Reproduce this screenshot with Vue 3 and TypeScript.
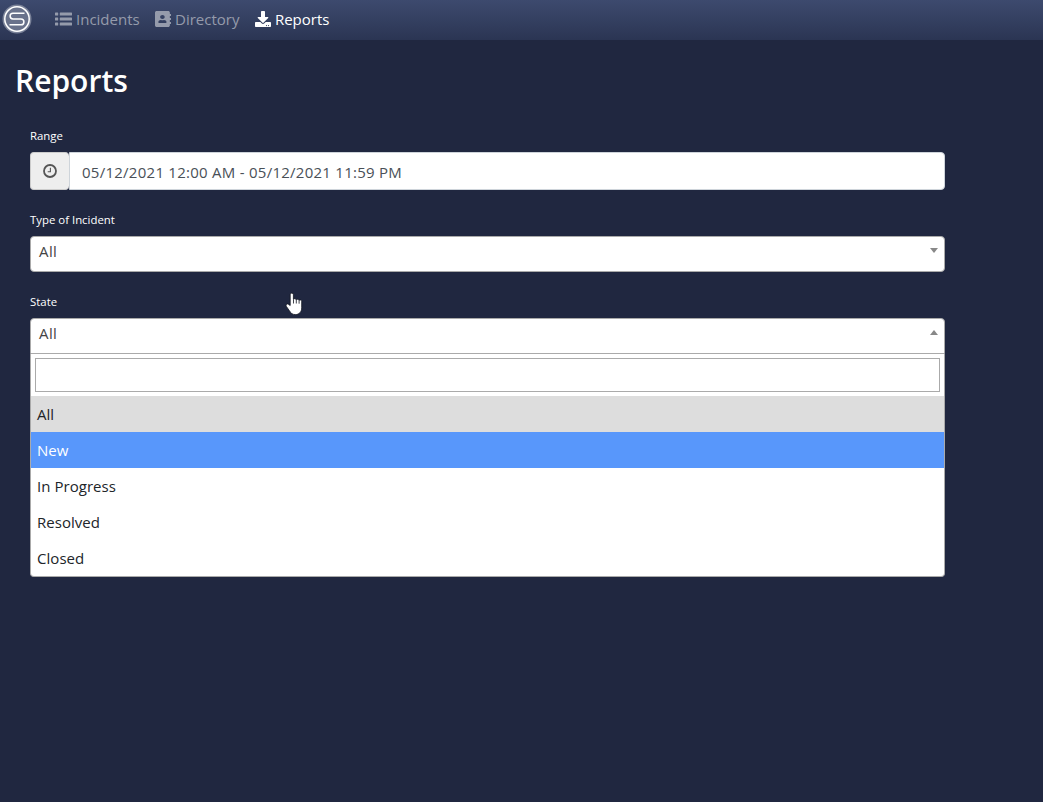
<script setup lang="ts">
import { ref } from 'vue'

interface NavItem {
  label: string
  viewBox: string
  width: number
  path: string
  active: boolean
}

const navItems: NavItem[] = [
  {
    label: 'Incidents',
    viewBox: '0 0 512 512',
    width: 17,
    active: false,
    path: 'M80 368H16a16 16 0 0 0-16 16v64a16 16 0 0 0 16 16h64a16 16 0 0 0 16-16v-64a16 16 0 0 0-16-16zm0-320H16A16 16 0 0 0 0 64v64a16 16 0 0 0 16 16h64a16 16 0 0 0 16-16V64a16 16 0 0 0-16-16zm0 160H16a16 16 0 0 0-16 16v64a16 16 0 0 0 16 16h64a16 16 0 0 0 16-16v-64a16 16 0 0 0-16-16zm416 160H160a16 16 0 0 0-16 16v64a16 16 0 0 0 16 16h336a16 16 0 0 0 16-16v-64a16 16 0 0 0-16-16zm0-320H160a16 16 0 0 0-16 16v64a16 16 0 0 0 16 16h336a16 16 0 0 0 16-16V64a16 16 0 0 0-16-16zm0 160H160a16 16 0 0 0-16 16v64a16 16 0 0 0 16 16h336a16 16 0 0 0 16-16v-64a16 16 0 0 0-16-16z',
  },
  {
    label: 'Directory',
    viewBox: '0 0 448 512',
    width: 16,
    active: false,
    path: 'M436 160c6.6 0 12-5.4 12-12v-40c0-6.6-5.4-12-12-12h-20V48c0-26.5-21.5-48-48-48H48C21.5 0 0 21.5 0 48v416c0 26.5 21.5 48 48 48h320c26.5 0 48-21.5 48-48v-48h20c6.6 0 12-5.4 12-12v-40c0-6.6-5.4-12-12-12h-20v-64h20c6.6 0 12-5.4 12-12v-40c0-6.6-5.4-12-12-12h-20v-64h20zm-228-32c35.3 0 64 28.7 64 64s-28.7 64-64 64-64-28.7-64-64 28.7-64 64-64zm112 236.8c0 10.6-10 19.2-22.4 19.2H118.4C106 384 96 375.4 96 364.8v-19.2c0-31.8 30.1-57.6 67.2-57.6h5c12.3 5.1 25.7 8 39.8 8s27.6-2.9 39.8-8h5c37.1 0 67.2 25.8 67.2 57.6v19.2z',
  },
  {
    label: 'Reports',
    viewBox: '0 0 512 512',
    width: 16,
    active: true,
    path: 'M216 0h80c13.3 0 24 10.7 24 24v168h87.7c17.8 0 26.7 21.5 14.1 34.1L269.7 378.3c-7.5 7.5-19.8 7.5-27.3 0L90.1 226.1c-12.6-12.6-3.7-34.1 14.1-34.1H192V24c0-13.3 10.7-24 24-24zm296 376v112c0 13.3-10.7 24-24 24H24c-13.3 0-24-10.7-24-24V376c0-13.3 10.7-24 24-24h146.7l49 49c20.1 20.1 52.5 20.1 72.6 0l49-49H488c13.3 0 24 10.7 24 24zm-124 88c0-11-9-20-20-20s-20 9-20 20 9 20 20 20 20-9 20-20zm64 0c0-11-9-20-20-20s-20 9-20 20 9 20 20 20 20-9 20-20z',
  },
]

const range = ref('05/12/2021 12:00 AM - 05/12/2021 11:59 PM')
const search = ref('')
const selected = ref('All')
const highlighted = ref('New')
const states: string[] = ['All', 'New', 'In Progress', 'Resolved', 'Closed']
</script>

<template>
  <div class="page">
    <header class="navbar">
      <svg class="logo" viewBox="0 0 30 30">
        <circle cx="15" cy="15" r="14.5" fill="#7b8399" />
        <circle cx="15" cy="15" r="12.2" fill="#69728b" stroke="#fff" stroke-width="1.5" />
        <path d="M22.5 9.2H11a2.9 2.9 0 0 0 0 5.8h8a2.9 2.9 0 0 1 0 5.8H7.5" fill="none" stroke="#fff" stroke-width="1.5" />
      </svg>
      <nav class="nav">
        <a v-for="item in navItems" :key="item.label" class="nav-link" :class="{ active: item.active }">
          <svg :width="item.width" height="16" :viewBox="item.viewBox" preserveAspectRatio="none">
            <path :d="item.path" fill="currentColor" />
          </svg>
          <span>{{ item.label }}</span>
        </a>
      </nav>
    </header>

    <main>
      <h1>Reports</h1>
      <form class="form" @submit.prevent>
        <label class="label">Range</label>
        <div class="range">
          <span class="addon">
            <svg width="14" height="14" viewBox="0 0 14 14" fill="none" stroke="#555">
              <circle cx="7" cy="7" r="6" stroke-width="1.8" />
              <path d="M7.4 3.7v4H4.7" stroke-width="1.1" />
            </svg>
          </span>
          <input v-model="range" class="range-input" type="text" />
        </div>

        <label class="label type-label">Type of Incident</label>
        <div class="select">
          <span>All</span>
          <i class="arrow down"></i>
        </div>

        <label class="label state-label">State</label>
        <div class="select open">
          <span>{{ selected }}</span>
          <i class="arrow up"></i>
        </div>
        <div class="dropdown">
          <div class="search-wrap">
            <input v-model="search" class="search" type="text" />
          </div>
          <ul class="options">
            <li
              v-for="state in states"
              :key="state"
              :class="{ selected: state === selected, highlighted: state === highlighted }"
              @mouseenter="highlighted = state"
              @click="selected = state"
            >{{ state }}</li>
          </ul>
        </div>
      </form>
    </main>

    <svg class="pointer" width="18" height="24" viewBox="0 0 18 24">
      <path
        d="M5.2 13.5V2.7a1.6 1.6 0 0 1 3.2 0v4.6a1.6 1.6 0 0 1 2.8.5 1.6 1.6 0 0 1 2.8.8 1.5 1.5 0 0 1 2.7 1v6.2c0 4-2.5 6.8-6.2 6.8-3.2 0-4.8-1.5-6.1-3.9L1.2 14.2c-.8-1.7 1.1-3 2.4-1.8z"
        fill="#fff" stroke="#11151f" stroke-width=".8"
      />
      <path d="M8.5 7.5v4M11.3 8v3.5M14.1 9v2.7" stroke="#11151f" stroke-width=".8" />
    </svg>
  </div>
</template>

<style>
html, body { margin: 0; background: #202740; overflow: hidden; }
</style>

<style scoped>
.page {
  position: relative;
  box-sizing: border-box;
  height: 802px;
  background: #202740;
  color: #fff;
  font-family: "Open Sans", "Noto Sans", sans-serif;
  font-size: 15px;
  line-height: 24px;
  overflow: hidden;
}
.page * { box-sizing: border-box; }
.navbar {
  display: flex;
  align-items: center;
  height: 40px;
  padding-left: 2px;
  background: linear-gradient(#3d4a6e, #2b3553);
}
.logo { width: 30px; height: 30px; margin-top: -2px; }
.nav { display: flex; gap: 15.4px; margin-left: 23px; margin-top: -2px; }
.nav-link { display: flex; align-items: center; gap: 4px; color: #959bab; }
.nav-link.active { color: #fff; }
h1 { margin: 22px 0 0 15px; font-size: 30px; line-height: 38px; font-weight: 600; }
.form { width: 915px; margin: 26px 0 0 30px; }
.label { display: block; height: 18px; padding-top: 1px; font-size: 11.4px; line-height: 18px; }
.range { display: flex; height: 38px; margin-top: 8px; }
.addon {
  display: flex;
  align-items: center;
  justify-content: center;
  width: 39px;
  background: #eee;
  border: 1px solid #ccc;
  border-right: 0;
  border-radius: 4px;
}
.range-input {
  flex: 1;
  min-width: 0;
  padding: 2px 12px 0;
  border: 1px solid #ced4da;
  border-radius: 0 4px 4px 0;
  background: #fff;
  color: #495057;
  font: inherit;
  letter-spacing: 0.26px;
  outline: 0;
}
.type-label { margin-top: 20px; }
.select {
  display: flex;
  justify-content: space-between;
  height: 36px;
  margin-top: 8px;
  padding: 2px 6px 0 8px;
  border: 1px solid #aaa;
  border-radius: 4px;
  background: #fff;
  color: #444;
  letter-spacing: 0.4px;
}
.state-label { margin-top: 20px; }
.select.open { border-radius: 4px 4px 0 0; }
.arrow { width: 0; height: 0; margin-top: 9px; border: 4px solid transparent; }
.arrow.down { border-top: 5px solid #888; border-bottom: 0; }
.arrow.up { border-bottom: 5px solid #888; border-top: 0; }
.dropdown {
  height: 223px;
  border: 1px solid #aaa;
  border-top: 0;
  border-radius: 0 0 4px 4px;
  background: #fff;
  color: #212529;
  overflow: hidden;
}
.search-wrap { padding: 4px; }
.search { display: block; width: 100%; height: 34px; border: 1px solid #aaa; outline: 0; font: inherit; }
.options { margin: 0; padding: 0; list-style: none; }
.options li { height: 36px; padding: 6px; letter-spacing: 0.04px; }
.options li.selected { background: #ddd; }
.options li.highlighted { background: #5897fb; color: #fff; }
.pointer { position: absolute; left: 285px; top: 292px; }
</style>
